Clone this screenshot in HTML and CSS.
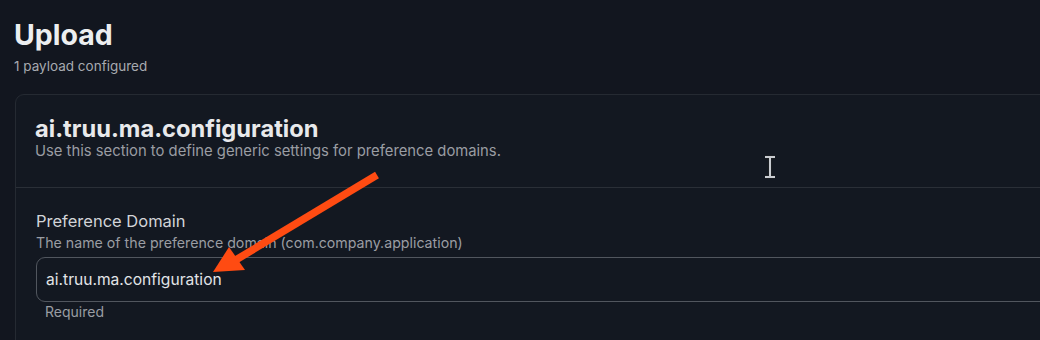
FILE: index.html
```html
<!DOCTYPE html>
<html lang="en">
<head>
  <meta charset="UTF-8">
  <meta name="viewport" content="width=device-width, initial-scale=1.0">
  <title>Upload</title>
  <link rel="stylesheet" href="styles.css">
</head>
<body>
  <div class="page">
    <h1>Upload</h1>
    <p class="count">1 payload configured</p>

    <div class="card">
      <div class="card-header">
        <h2>ai.truu.ma.configuration</h2>
        <p>Use this section to define generic settings for preference domains.</p>
      </div>
      <div class="card-body">
        <label class="field-label">Preference Domain</label>
        <p class="field-help">The name of the preference domain (com.company.application)</p>
        <div class="input">ai.truu.ma.configuration</div>
        <p class="field-note">Required</p>
      </div>
    </div>

    <!-- flèche d'annotation -->
    <svg class="arrow" width="180" height="120" viewBox="0 0 180 120">
      <line x1="165" y1="8" x2="22" y2="94" stroke="#ff4b12" stroke-width="7.5"/>
      <polygon points="1,105 17,80 33,103" fill="#ff4b12"/>
    </svg>

    <!-- curseur texte -->
    <svg class="cursor" width="14" height="24" viewBox="0 0 14 24">
      <path d="M2 2 H12 M7 2 V22 M2 22 H12" stroke="#1a1d22" stroke-width="4.5" fill="none"/>
      <path d="M2 2 H12 M7 2 V22 M2 22 H12" stroke="#c9ccd1" stroke-width="2" fill="none"/>
    </svg>
  </div>
</body>
</html>
```

FILE: styles.css
```css
body {
  margin: 0;
  background-color: #12161f;
  font-family: Inter, 'Noto Sans', Arial, sans-serif;
  color: #e6e7e9;
}
.page {
  position: relative;
  width: 1040px;
  height: 340px;
  overflow: hidden;
  padding: 18px 0 0 14px;
  box-sizing: border-box;
}
h1 {
  margin: 0;
  font-size: 28.5px;
  line-height: 34px;
  font-weight: 700;
  color: #eceef0;
}
.count {
  margin: 5px 0 0 0;
  font-size: 13.5px;
  line-height: 18px;
  color: #a7aab0;
}
/* Carte principale */
.card {
  margin: 19px -40px 0 1px;
  border: 1px solid #252a32;
  border-radius: 9px;
  background-color: #131821;
}
.card-header {
  padding: 20px 20px 27px 19px;
  border-bottom: 1px solid #2a2f37;
}
.card-header h2 {
  margin: 0;
  font-size: 23.7px;
  line-height: 27px;
  font-weight: 700;
  color: #e8e9eb;
}
.card-header p {
  margin: 0;
  font-size: 14.8px;
  line-height: 18px;
  color: #9a9da3;
}
.card-body {
  padding: 22px 20px 40px 20px;
}
.field-label {
  display: block;
  font-size: 16.5px;
  line-height: 22px;
  color: #d2d4d8;
}
.field-help {
  margin: 1px 0 0 0;
  font-size: 14.2px;
  line-height: 19px;
  color: #9a9da3;
}
.input {
  margin-top: 5px;
  height: 45px;
  box-sizing: border-box;
  border: 1px solid #51565e;
  border-radius: 9px;
  padding: 0 9px;
  display: flex;
  align-items: center;
  font-size: 15.6px;
  color: #e2e4e7;
}
.field-note {
  margin: 1px 0 0 9px;
  font-size: 14px;
  line-height: 18px;
  color: #9a9da3;
}
.arrow {
  position: absolute;
  left: 212px;
  top: 167px;
}
.cursor {
  position: absolute;
  left: 763px;
  top: 155px;
}
```
